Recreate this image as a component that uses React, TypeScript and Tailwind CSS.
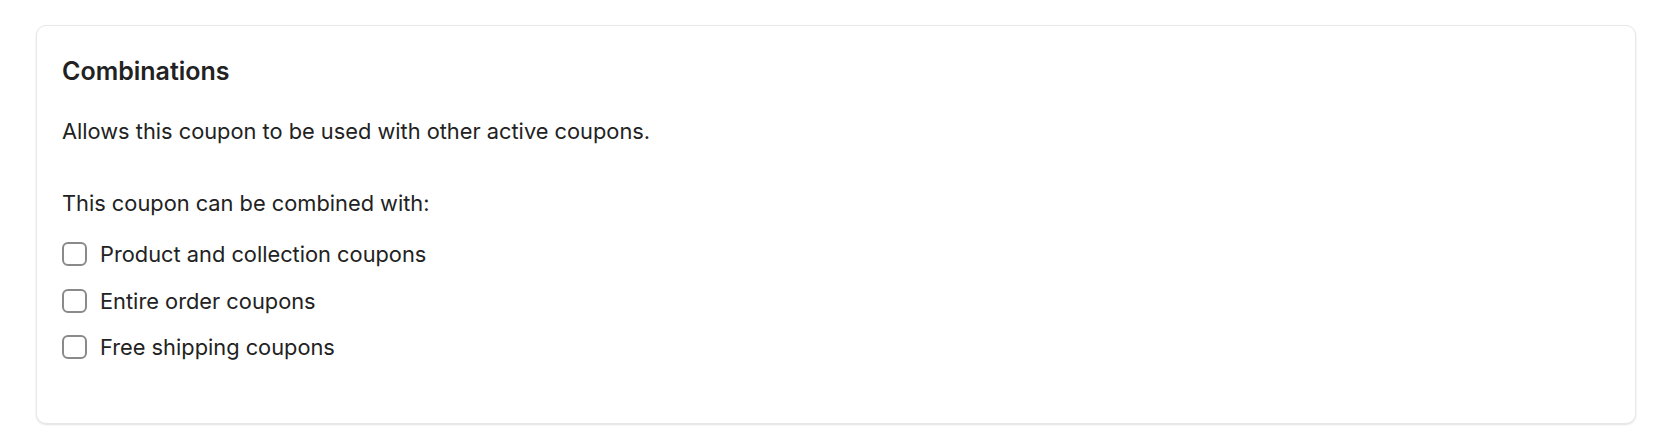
import React from 'react';

const options = [
  'Product and collection coupons',
  'Entire order coupons',
  'Free shipping coupons',
];

function Checkbox({ label }: { label: string }) {
  return (
    <label className="flex items-center gap-[13px] h-[24px]">
      <span className="w-[25px] h-[24px] rounded-[6px] border-[2.5px] border-[#8a8a8a] bg-white shrink-0" />
      <span>{label}</span>
    </label>
  );
}

export default function App() {
  return (
    <div
      className="min-h-[446px] bg-white pt-[25px] pl-[36px] pr-[26px]"
      style={{ fontFamily: 'Inter, "Noto Sans", sans-serif' }}
    >
      <div className="h-[399px] rounded-[10px] border border-[#e8e8e8] bg-white pt-[31px] px-[25px] shadow-[0_1px_2px_rgba(0,0,0,0.12)] text-[#222222]">
        <h2 className="text-[25px] leading-[28px] font-semibold">Combinations</h2>
        <p className="mt-[33px] text-[21.8px] leading-[26px]">
          Allows this coupon to be used with other active coupons.
        </p>
        <p className="mt-[46px] text-[21.8px] leading-[26px]">
          This coupon can be combined with:
        </p>
        <div className="mt-[26px] flex flex-col gap-[22.5px] text-[21.8px] leading-[24px]">
          {options.map((o) => (
            <Checkbox key={o} label={o} />
          ))}
        </div>
      </div>
    </div>
  );
}
